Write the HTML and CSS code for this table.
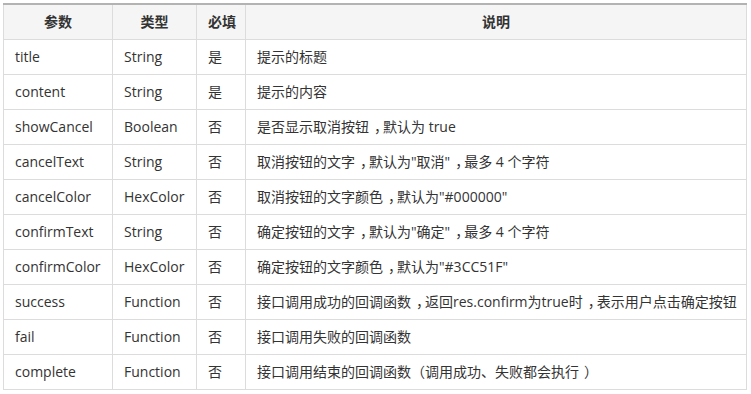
FILE: index.html
```html
<!DOCTYPE html>
<html lang="zh-CN">
<head>
<meta charset="utf-8">
<title>参数说明</title>
<link rel="stylesheet" href="styles.css">
</head>
<body>
<div class="wrap">
<table class="params">
  <colgroup>
    <col class="c-name">
    <col class="c-type">
    <col class="c-req">
    <col class="c-desc">
  </colgroup>
  <thead>
    <tr><th>参数</th><th>类型</th><th>必填</th><th>说明</th></tr>
  </thead>
  <tbody>
    <tr><td>title</td><td>String</td><td>是</td><td>提示的标题</td></tr>
    <tr><td>content</td><td>String</td><td>是</td><td>提示的内容</td></tr>
    <tr><td>showCancel</td><td>Boolean</td><td>否</td><td>是否显示取消按钮<span class="pr">，</span>默认为 true</td></tr>
    <tr><td>cancelText</td><td>String</td><td>否</td><td>取消按钮的文字<span class="pr">，</span>默认为"取消"<span class="pr">，</span>最多 4 个字符</td></tr>
    <tr><td>cancelColor</td><td>HexColor</td><td>否</td><td>取消按钮的文字颜色<span class="pr">，</span>默认为"#000000"</td></tr>
    <tr><td>confirmText</td><td>String</td><td>否</td><td>确定按钮的文字<span class="pr">，</span>默认为"确定"<span class="pr">，</span>最多 4 个字符</td></tr>
    <tr><td>confirmColor</td><td>HexColor</td><td>否</td><td>确定按钮的文字颜色<span class="pr">，</span>默认为"#3CC51F"</td></tr>
    <tr><td>success</td><td>Function</td><td>否</td><td>接口调用成功的回调函数<span class="pr">，</span>返回res.confirm为true时<span class="pr">，</span>表示用户点击确定按钮</td></tr>
    <tr><td>fail</td><td>Function</td><td>否</td><td>接口调用失败的回调函数</td></tr>
    <tr><td>complete</td><td>Function</td><td>否</td><td>接口调用结束的回调函数（调用成功、失败都会执行<span class="pr">）</span></td></tr>
  </tbody>
</table>
</div>
</body>
</html>
```

FILE: styles.css
```css
html, body {
  margin: 0;
  padding: 0;
  background: #fff;
}
.wrap {
  padding: 3px 0 0 3px;
}
.params {
  border-collapse: collapse;
  table-layout: fixed;
  width: 744px;
  font-family: "Open Sans", "Noto Sans CJK SC", sans-serif;
  font-size: 14px;
  color: #333;
}
.c-name { width: 109px; }
.c-type { width: 84px; }
.c-req { width: 49px; }
.params th,
.params td {
  border: 1px solid #dcdcdc;
  padding: 0 11px;
  box-sizing: border-box;
  white-space: nowrap;
  line-height: 20px;
}
.params th {
  background: #f5f5f5;
  font-weight: bold;
  text-align: center;
  border-top: 2px solid #b3b3b3;
  height: 35px;
}
.params td {
  text-align: left;
  height: 35px;
}
/* centre full-width punctuation inside its em box */
.pr {
  padding-left: 5px;
  letter-spacing: -5px;
}
```
